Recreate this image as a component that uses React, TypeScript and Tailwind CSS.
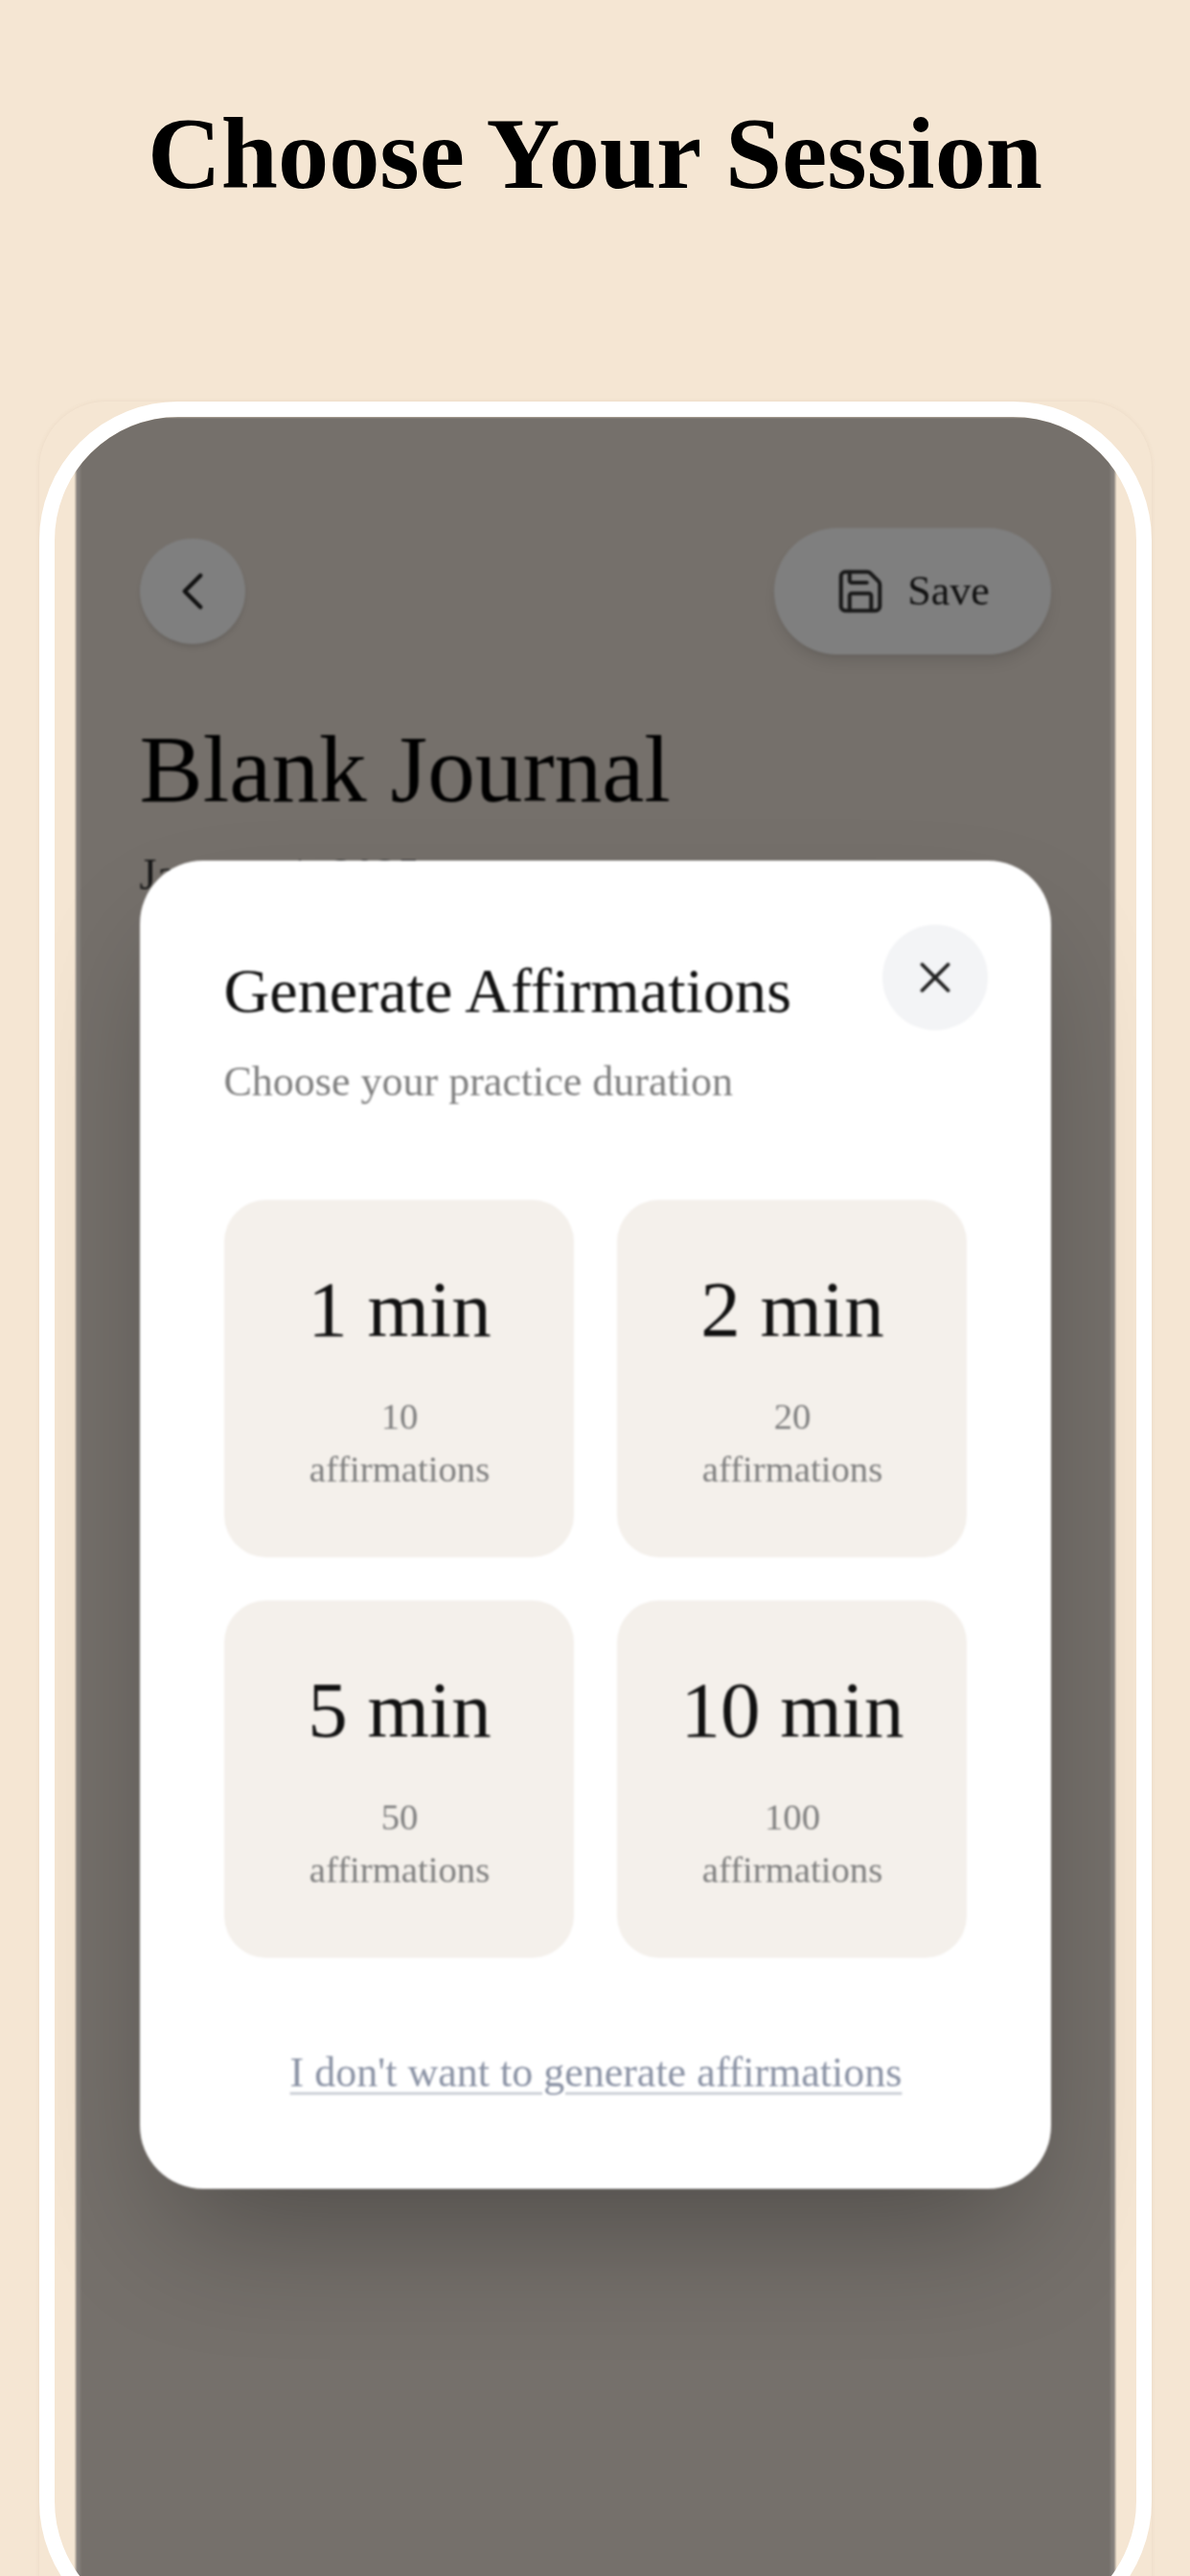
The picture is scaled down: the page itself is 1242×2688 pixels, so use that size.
import { ChevronLeft, Save, X } from 'lucide-react'

const OPTIONS = [
  { label: '1 min', count: 10 },
  { label: '2 min', count: 20 },
  { label: '5 min', count: 50 },
  { label: '10 min', count: 100 },
]

function OptionCard({ label, count }: { label: string; count: number }) {
  return (
    <button className="flex h-[373px] flex-col items-center rounded-[44px] bg-[#f4f0eb] pt-[73px] pl-[2px]">
      <span className="text-[83px] leading-[82px] text-[#111]">{label}</span>
      <span className="mt-[44px] w-[200px] text-[38.7px] leading-[55px] text-[#808080]">
        {count} affirmations
      </span>
    </button>
  )
}

export default function App() {
  return (
    <div className="flex h-[2688px] w-[1242px] flex-col items-center overflow-hidden bg-[#f5e6d3] font-['Liberation_Serif',serif]">
      <h1 className="mt-[96px] text-[106.4px] leading-[128px] font-bold text-black">Choose Your Session</h1>

      <div className="mt-[195px] shrink-0 rounded-[70px] shadow-[0_0_5px_rgba(120,90,50,0.08)]">
        <div className="h-[2336px] w-[1161px] overflow-hidden rounded-[145px] border-[16px] border-white bg-[#f5e6d3] px-[22px]">
          <div className="relative h-full bg-[#eae0d6] px-[67px] pt-[116px] blur-[0.8px]">
            <div className="flex items-center justify-between">
              <button className="flex size-[110px] items-center justify-center rounded-full bg-white shadow-md">
                <ChevronLeft className="size-[66px] text-[#222]" strokeWidth={1.6} />
              </button>
              <button className="flex h-[132px] w-[289px] items-center justify-center gap-[22px] rounded-full bg-white text-[44px] text-[#222] shadow-lg">
                <Save className="size-[54px] text-[#333]" strokeWidth={1.8} />
                Save
              </button>
            </div>
            <h2 className="mt-[65px] text-[99.3px] leading-[110px] text-black">Blank Journal</h2>
            <p className="mt-[25px] text-[46px] leading-[60px] text-[#333]">January 1, 2025</p>

            <div className="absolute inset-0 border-x-[5px] border-x-white/10 bg-black/50 px-[62px] pt-[463px]">
              <div className="h-[1386px] rounded-[66px] bg-white px-[88px] pt-[67px] shadow-[0_68px_136px_-32px_rgba(0,0,0,0.32)]">
                <div className="flex items-start justify-between">
                  <div className="pt-[31px]">
                    <h3 className="text-[66.2px] leading-[76px] text-[#111]">Generate Affirmations</h3>
                    <p className="mt-[27px] text-[44px] leading-[60px] text-[#808080]">Choose your practice duration</p>
                  </div>
                  <button className="-mr-[22px] flex size-[110px] items-center justify-center rounded-full bg-[#f3f4f6]">
                    <X className="size-[54px] text-[#222]" strokeWidth={1.7} />
                  </button>
                </div>
                <div className="mt-[93px] grid grid-cols-2 gap-[45px]">
                  {OPTIONS.map((o) => (
                    <OptionCard key={o.label} label={o.label} count={o.count} />
                  ))}
                </div>
                <div className="mt-[90px] pl-[2px] text-center">
                  <a className="text-[44px] leading-[60px] text-[#8b93a5] underline decoration-[#cdd1d8] decoration-[3px] underline-offset-[6px]">
                    I don't want to generate affirmations
                  </a>
                </div>
              </div>
            </div>
          </div>
        </div>
      </div>
    </div>
  )
}
